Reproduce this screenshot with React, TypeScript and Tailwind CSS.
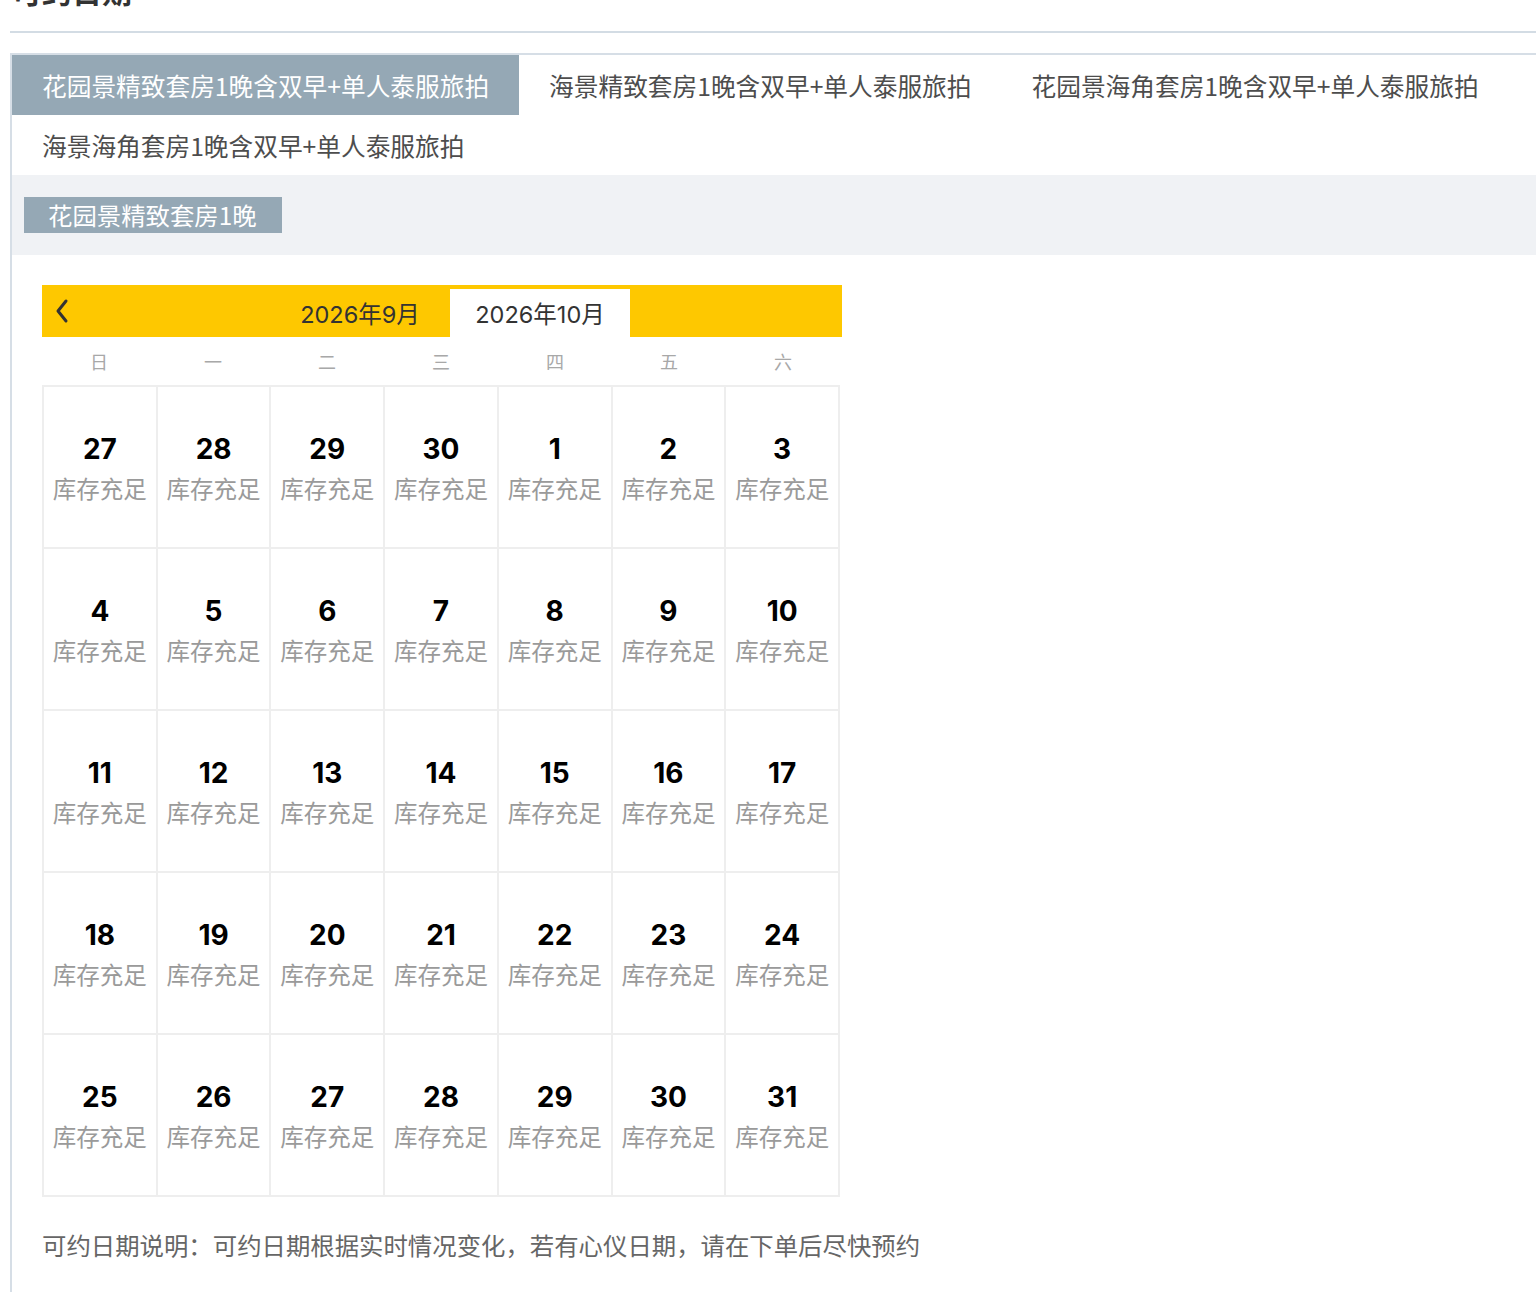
import React from "react";

const font = { fontFamily: '"Noto Sans CJK SC", "Noto Sans", sans-serif' };
const numFont = { fontFamily: 'Inter, "Noto Sans CJK SC", sans-serif' };

const tabs = [
  "花园景精致套房1晚含双早+单人泰服旅拍",
  "海景精致套房1晚含双早+单人泰服旅拍",
  "花园景海角套房1晚含双早+单人泰服旅拍",
  "海景海角套房1晚含双早+单人泰服旅拍",
];

const weekdays = ["日", "一", "二", "三", "四", "五", "六"];

const days: number[] = [27, 28, 29, 30, ...Array.from({ length: 31 }, (_, i) => i + 1)];

export default function App() {
  return (
    <div className="min-h-[1292px] bg-white overflow-hidden pl-[10px]" style={font}>
      <div className="-mt-[28px] h-[36px] pl-[2px] text-[30px] leading-[36px] font-bold text-[#333]">可约日期</div>
      <div className="mt-[23px] h-[2px] bg-[#d3dce4]" />
      <div className="mt-[20px] border-t-2 border-l-2 border-[#d6dee6]">
        <div className="flex flex-wrap">
          {tabs.map((t, i) => (
            <div
              key={t}
              className={
                "h-[60px] px-[30px] text-[24.7px] leading-[60px] whitespace-nowrap " +
                (i === 0 ? "bg-[#95a8b5] text-white" : "text-[#4d4d4d]")
              }
            >
              {t}
            </div>
          ))}
        </div>
        <div className="h-[80px] bg-[#f0f2f5] pl-[12px] pt-[22px]">
          <div className="inline-block h-[36px] bg-[#95a8b5] pl-[24px] pr-[25px] text-[24.4px] leading-[36px] text-white">
            花园景精致套房1晚
          </div>
        </div>
        <div className="pl-[30px] pt-[30px] pb-[40px]">
          <div className="w-[800px]">
            <div className="flex h-[52px] items-end bg-[#fec800]">
              <div className="flex h-[52px] w-[228px] items-center pl-[12px]">
                <svg width="16" height="26" viewBox="0 0 16 26" fill="none">
                  <path d="M12 3 L4 13 L12 23" stroke="#333" strokeWidth="3" strokeLinecap="round" strokeLinejoin="round" />
                </svg>
              </div>
              <div className="flex h-[48px] w-[180px] items-center justify-center pt-[3px] text-[23.5px] text-[#333]" style={numFont}>
                2026年9月
              </div>
              <div className="flex h-[48px] w-[180px] items-center justify-center bg-white pt-[3px] text-[23.5px] text-[#333]" style={numFont}>
                2026年10月
              </div>
            </div>
            <div className="grid h-[48px] w-[798px] grid-cols-7 items-center text-center text-[18px] leading-[46px] text-[#a8a8a8]">
              {weekdays.map((w) => (
                <div key={w}>{w}</div>
              ))}
            </div>
            <div className="grid w-[798px] grid-cols-7 gap-[2px] bg-[#eeeeee] p-[2px]">
              {days.map((d, i) => (
                <div key={i} className="flex h-[160px] flex-col items-center justify-center bg-white">
                  <div className="pt-[3px] text-[28px] leading-[39px] font-bold text-black" style={numFont}>
                    {d}
                  </div>
                  <div className="text-[23.5px] leading-[38px] text-[#9a9a9a]">库存充足</div>
                </div>
              ))}
            </div>
            <div className="mt-[30px] whitespace-nowrap text-[24.4px] leading-[36px] text-[#666]">
              可约日期说明：可约日期根据实时情况变化，若有心仪日期，请在下单后尽快预约
            </div>
          </div>
        </div>
      </div>
    </div>
  );
}
